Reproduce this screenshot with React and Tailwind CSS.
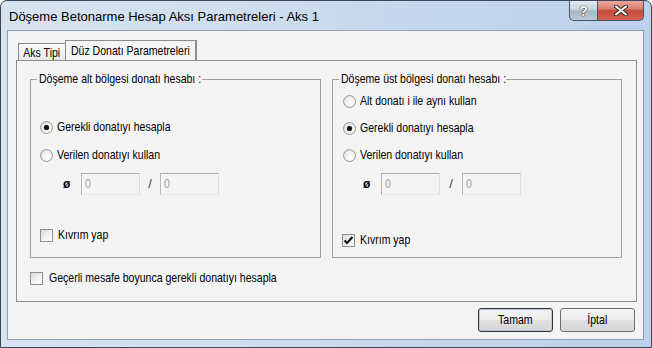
import React from 'react';

const UI = "font-['Liberation_Sans',Arial,sans-serif]";

// the dialog font is a condensed sans; Liberation Sans squeezed to match
function Txt({ children, center }) {
  return (
    <span
      className={`inline-block whitespace-nowrap scale-x-[0.81] ${center ? 'origin-center' : 'origin-left'}`}
    >
      {children}
    </span>
  );
}

function Radio({ checked, label }) {
  return (
    <div className="flex h-[16px] items-center">
      <span className="flex h-[13px] w-[13px] shrink-0 items-center justify-center rounded-full border border-[#969696] bg-[radial-gradient(circle_at_65%_65%,#ffffff_0%,#eeeeee_55%,#d2d2d2_100%)]">
        {checked && <span className="h-[5px] w-[5px] rounded-full bg-[#151515] shadow-[0_0_1px_#555]" />}
      </span>
      <span className="ml-[4px] text-[13px] leading-[16px] text-black">
        <Txt>{label}</Txt>
      </span>
    </div>
  );
}

function Checkbox({ checked, label, gap = 'ml-[5px]' }) {
  return (
    <div className="flex h-[16px] items-center">
      <span className="flex h-[13px] w-[13px] shrink-0 items-center justify-center border border-[#8e8f8f] bg-[linear-gradient(135deg,#d9d9d9_0%,#f4f4f4_60%,#ffffff_100%)]">
        {checked && (
          <svg width="11" height="11" viewBox="0 0 11 11">
            <polyline points="1.5,5.5 4,8 9.5,2" fill="none" stroke="#111" strokeWidth="2" />
          </svg>
        )}
      </span>
      <span className={`${gap} text-[13px] leading-[16px] text-black`}>
        <Txt>{label}</Txt>
      </span>
    </div>
  );
}

function TextBox() {
  return (
    <div className="flex h-[22px] w-[59px] items-center border border-t-[#abadb3] border-l-[#b5b8bf] border-r-[#dbdfe6] border-b-[#e3e9ef] bg-[#f4f4f4] pl-[3px] text-[13px] text-[#9b9b9b]">
      <Txt>0</Txt>
    </div>
  );
}

function DiaRow({ lead, slashW }) {
  return (
    <div className={`flex h-[22px] items-center ${lead}`}>
      <span className="w-[18px] text-[12px] font-bold leading-none text-black">ø</span>
      <TextBox />
      <span className={`${slashW} text-center text-[13px] text-[#444]`}>/</span>
      <TextBox />
    </div>
  );
}

function Group({ title, width, legendW, children }) {
  return (
    <fieldset className={`h-[186px] ${width} border border-[#a0a0a0]`}>
      <legend className={`ml-[6px] ${legendW} px-[2px] text-[13px] leading-[14px] text-black`}>
        <Txt>{title}</Txt>
      </legend>
      {children}
    </fieldset>
  );
}

function Button({ label, isDefault }) {
  return (
    <button
      className={`flex h-[24px] w-[75px] items-center justify-center rounded-[3px] border bg-[linear-gradient(#f4f4f4_0%,#ececec_50%,#e0e0e0_51%,#d6d6d6_100%)] text-[13px] text-black ${
        isDefault ? 'border-[#333] shadow-[inset_0_0_0_1px_#b8c8dc]' : 'border-[#707070]'
      }`}
    >
      <Txt center>{label}</Txt>
    </button>
  );
}

export default function App() {
  return (
    <div className={`${UI} flex h-[348px] w-[652px] flex-col overflow-hidden rounded-t-[7px] border border-[#3a4757] bg-[linear-gradient(90deg,#d7e3ef_0%,#d0deee_35%,#c5d7ec_65%,#bcd1ea_100%)]`}>
      <div className="flex h-[29px] shrink-0 items-start justify-between">
        <span className="pl-[8px] pt-[8px] text-[13px] leading-[16px] text-black">
          Döşeme Betonarme Hesap Aksı Parametreleri - Aks 1
        </span>
        <div className="mr-[7px] flex h-[20px]">
          <div className="flex w-[28px] items-center justify-center rounded-bl-[5px] border border-t-0 border-r-0 border-[#46566a] bg-[linear-gradient(#e3eaf1_0%,#c8d3de_45%,#a8b6c5_52%,#bdc9d5_100%)]">
            <span className="text-[14px] font-bold leading-none text-white [text-shadow:0_0_1px_#333,0_0_1px_#333,0_0_1px_#333]">?</span>
          </div>
          <div className="flex w-[47px] items-center justify-center rounded-br-[5px] border border-t-0 border-[#46566a] bg-[linear-gradient(#eaaa9c_0%,#d98070_40%,#c5493a_52%,#d4644f_100%)]">
            <svg width="14" height="11" viewBox="0 0 14 11">
              <path d="M2 1.5 L12 9.5 M12 1.5 L2 9.5" stroke="#3a2a28" strokeWidth="4" strokeLinecap="round" />
              <path d="M2 1.5 L12 9.5 M12 1.5 L2 9.5" stroke="#ffffff" strokeWidth="2" strokeLinecap="round" />
            </svg>
          </div>
        </div>
      </div>

      <div className="ml-[6px] mr-[7px] flex h-[310px] flex-col border border-[#8fa0b4] bg-[#f4f4f4] px-[8px] pt-[9px]">
        <div className="flex h-[20px] items-end pl-[2px]">
          <div className="flex h-[17px] w-[47px] items-center justify-center border border-b-0 border-r-0 border-[#898c95] bg-[linear-gradient(#fafafa,#e9e9e9)] pt-[1px] text-[13px] text-black">
            <Txt center>Aks Tipi</Txt>
          </div>
          <div className="-mb-px flex h-[21px] w-[132px] items-start justify-center border border-b-0 border-r-2 border-[#898c95] bg-[#f4f4f4] pt-[2px] text-[13px] leading-[16px] text-black">
            <Txt center>Düz Donatı Parametreleri</Txt>
          </div>
        </div>

        <div className="flex h-[242px] w-[621px] flex-col border border-[#898c95] pl-[13px] pt-[11px]">
          <div className="flex gap-[11px]">
            <Group title="Döşeme alt bölgesi donatı hesabı :" width="w-[291px]" legendW="w-[165px]">
              <div className="flex flex-col pl-[9px]">
                <div className="mt-[33px]">
                  <Radio checked label="Gerekli donatıyı hesapla" />
                </div>
                <div className="mt-[12px]">
                  <Radio label="Verilen donatıyı kullan" />
                </div>
              </div>
              <div className="mt-[10px]">
                <DiaRow lead="ml-[32px]" slashW="w-[20px]" />
              </div>
              <div className="mt-[32px] pl-[9px]">
                <Checkbox label="Kıvrım yap" />
              </div>
            </Group>

            <Group title="Döşeme üst bölgesi donatı hesabı :" width="w-[290px]" legendW="w-[167px]">
              <div className="flex flex-col pl-[10px]">
                <div className="mt-[7px]">
                  <Radio label="Alt donatı i ile aynı kullan" />
                </div>
                <div className="mt-[11px]">
                  <Radio checked label="Gerekli donatıyı hesapla" />
                </div>
                <div className="mt-[11px]">
                  <Radio label="Verilen donatıyı kullan" />
                </div>
              </div>
              <div className="mt-[10px]">
                <DiaRow lead="ml-[30px]" slashW="w-[22px]" />
              </div>
              <div className="mt-[37px] pl-[9px]">
                <Checkbox checked label="Kıvrım yap" />
              </div>
            </Group>
          </div>
          <div className="mt-[12px]">
            <Checkbox label="Geçerli mesafe boyunca gerekli donatıyı hesapla" gap="ml-[6px]" />
          </div>
        </div>

        <div className="mt-[6px] flex justify-end gap-[7px]">
          <Button label="Tamam" isDefault />
          <Button label="İptal" />
        </div>
      </div>
    </div>
  );
}
